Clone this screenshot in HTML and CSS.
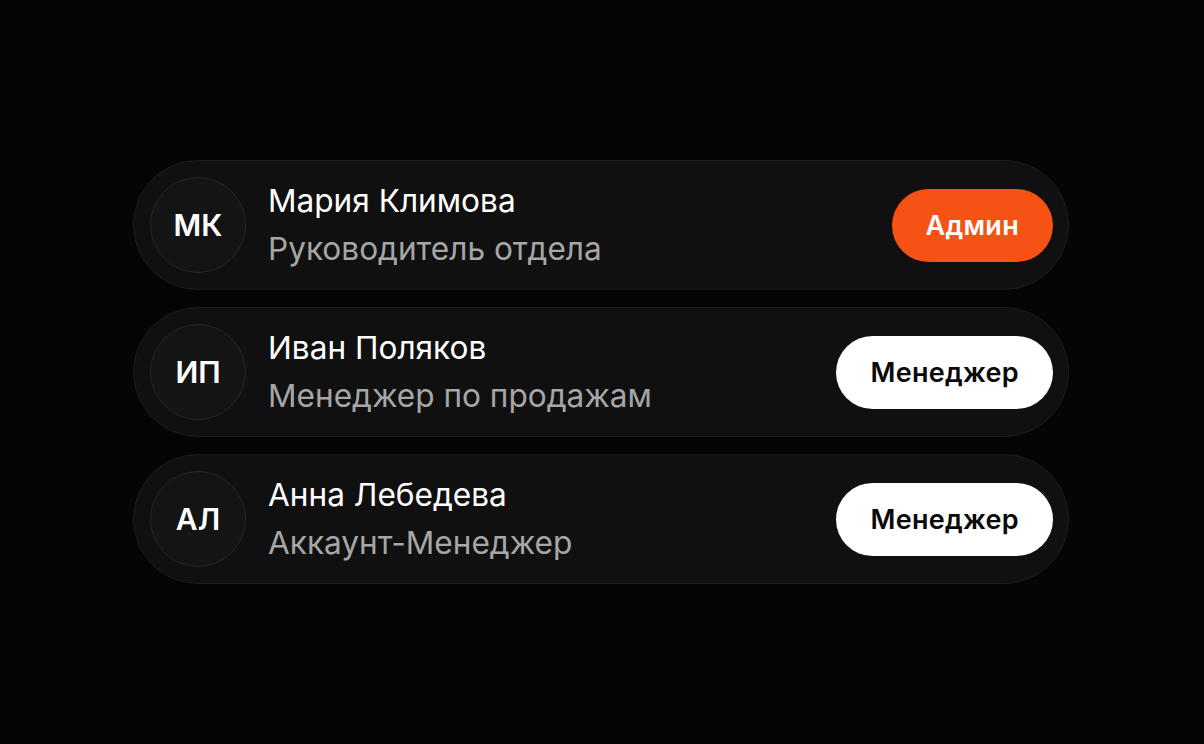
FILE: index.html
```html
<!DOCTYPE html>
<html lang="ru">
<head>
    <meta charset="UTF-8">
    <meta name="viewport" content="width=device-width, initial-scale=1.0">
    <title>Команда</title>
    <link rel="stylesheet" href="styles.css">
</head>
<body>

<div class="team">
    <!-- Мария -->
    <div class="member">
        <div class="avatar">МК</div>
        <div class="info">
            <div class="name">Мария Климова</div>
            <div class="role">Руководитель отдела</div>
        </div>
        <span class="badge badge-admin">Админ</span>
    </div>

    <!-- Иван -->
    <div class="member">
        <div class="avatar">ИП</div>
        <div class="info">
            <div class="name">Иван Поляков</div>
            <div class="role">Менеджер по продажам</div>
        </div>
        <span class="badge badge-manager">Менеджер</span>
    </div>

    <!-- Анна -->
    <div class="member">
        <div class="avatar">АЛ</div>
        <div class="info">
            <div class="name">Анна Лебедева</div>
            <div class="role">Аккаунт-Менеджер</div>
        </div>
        <span class="badge badge-manager">Менеджер</span>
    </div>
</div>

</body>
</html>
```

FILE: styles.css
```css
body {
    margin: 0;
    background-color: #050505;
    font-family: Inter, "Noto Sans", sans-serif;
    color: #ffffff;
}
.team {
    width: 936px;
    margin: 160px 0 0 133px;
    display: flex;
    flex-direction: column;
    gap: 17px;
}
.member {
    height: 130px;
    box-sizing: border-box;
    display: flex;
    align-items: center;
    padding: 0 15px 0 16px;
    background-color: #111010;
    border: 1px solid #1c1c1c;
    border-radius: 65px;
}
.avatar {
    width: 96px;
    height: 96px;
    box-sizing: border-box;
    border-radius: 50%;
    background-color: #141414;
    border: 1px solid #262626;
    display: flex;
    align-items: center;
    justify-content: center;
    font-size: 30px;
    font-weight: 600;
    flex-shrink: 0;
}
.info {
    flex: 1;
    margin-left: 22px;
}
.name {
    font-size: 31.6px;
    line-height: 48px;
    color: #ffffff;
}
.role {
    font-size: 31.6px;
    line-height: 48px;
    color: #a6a6a6;
}
.badge {
    height: 73px;
    padding: 0 34px;
    border-radius: 37px;
    display: flex;
    align-items: center;
    font-size: 27px;
    font-weight: 600;
    letter-spacing: 0.3px;
}
.badge-admin {
    background-color: #f55213;
    color: #ffffff;
}
.badge-manager {
    background-color: #ffffff;
    color: #0a0a0a;
}
```
